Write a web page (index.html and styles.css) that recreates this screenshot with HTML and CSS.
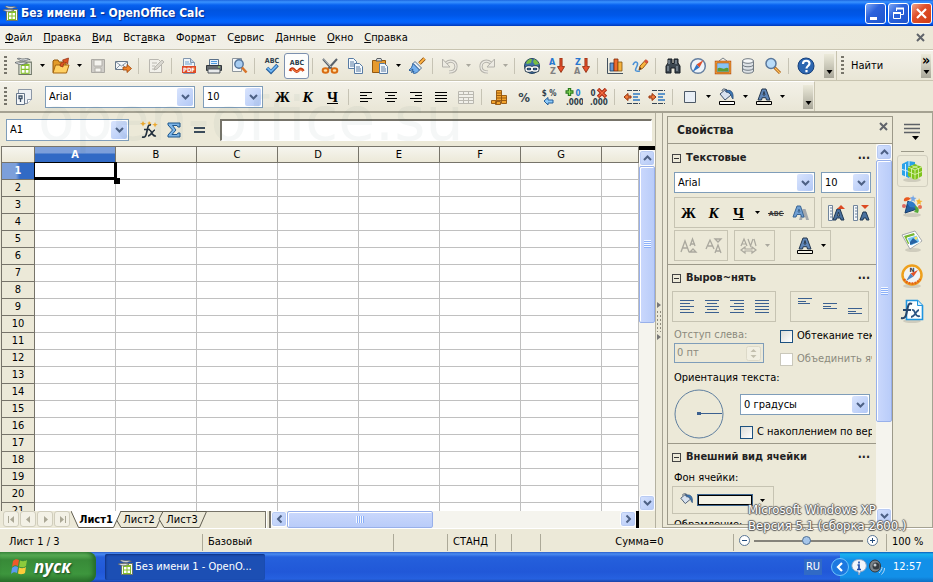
FILE: index.html
```html
<!DOCTYPE html>
<html lang="ru">
<head>
<meta charset="utf-8">
<title>Без имени 1 - OpenOffice Calc</title>
<link rel="stylesheet" href="styles.css">
</head>
<body>
<svg class="sprite" aria-hidden="true">
  <symbol id="i-calc" viewBox="0 0 16 16"><path d="M3.500 4.500h11v11h-11z" fill="#f8faf2" stroke="#6b7466"/><path d="M5 6h8v9H5z" fill="#86bf2c"/><path d="M6 8h2.500v2.500H6zM9.500 8H12v2.500H9.500zM6 11.500h2.500V14H6zM9.500 11.500H12V14H9.500z" fill="#fff"/><path d="M2 1.500c2-1 3 .3 5 .3S11 .5 13.500 2.500C11 2 10 3.500 7.500 3.500S4 2.500 2 1.500zM0 5c2-1.200 4-.3 5.500-.3S8.500 3.800 11 5.500C9 5.300 8 6.800 6 6.800S2 6 0 5z" fill="#e4e7e8" stroke="#596065" stroke-width=".7"/></symbol>
  <symbol id="i-chev" viewBox="0 0 9 6"><path d="M1 1l3.500 3.500L8 1" fill="none" stroke="#4d6185" stroke-width="2"/></symbol>
  <symbol id="i-drop" viewBox="0 0 5 3"><path d="M0 0h5L2.500 3z" fill="currentColor"/></symbol>
  <symbol id="i-fontcolor" viewBox="0 0 18 18"><path d="M3 12L7 1h4l4 11h-3.500l-.7-2.300H7.200L6.500 12zm5-5h2L9 3.500z" fill="#5f86b8" stroke="#26384f"/><path d="M1.500 13.500h15v3h-15z" fill="#f3f1e6" stroke="#000"/></symbol>
  <symbol id="i-bucket" viewBox="0 0 18 18"><path d="M2 7l6-5 5 6-6 5z" fill="#d8e2ef" stroke="#40536c"/><path d="M4 4c0-3 5-3 5 2" fill="none" stroke="#40536c"/><path d="M7 4c5-2 9 0 8 8-2-1-1-5-4-6z" fill="#3c78b8" stroke="#28486e" stroke-width=".7"/></symbol>
  <symbol id="i-left" viewBox="0 0 18 18"><path d="M3 4.500h12M3 7.500h7M3 10.500h12M3 13.500h8" stroke="currentColor"/></symbol>
  <symbol id="i-center" viewBox="0 0 18 18"><path d="M3 4.500h12M6 7.500h7M3 10.500h12M5 13.500h8" stroke="currentColor"/></symbol>
  <symbol id="i-right" viewBox="0 0 18 18"><path d="M3 4.500h12M8 7.500h7M3 10.500h12M7 13.500h8" stroke="currentColor"/></symbol>
  <symbol id="i-just" viewBox="0 0 18 18"><path d="M3 4.500h12M3 7.500h12M3 10.500h12M3 13.500h12" stroke="currentColor"/></symbol>
  <symbol id="i-close" viewBox="0 0 9 9"><path d="M1 1l7 7M8 1L1 8" stroke="#60646a" stroke-width="2"/></symbol>
  <symbol id="i-redarrow" viewBox="0 0 7 14"><path d="M2.500 0h2v8H6.800L3.500 13.500 .2 8h2.300z" fill="#e8502c" stroke="#8d2a0c" stroke-width=".8"/></symbol>
  <symbol id="i-overflow" viewBox="0 0 9 5"><path d="M1.500 0h6L4.500 4z" fill="#000"/></symbol>
</svg>

<div class="app">
  <header class="titlebar">
    <svg class="s16"><use href="#i-calc"/></svg>
    <h1>Без имени 1 - OpenOffice Calc</h1>
    <div class="winbtns">
      <button class="wb" aria-label="Свернуть"><svg viewBox="0 0 19 19"><path d="M4 13h7v3H4z" fill="#fff"/></svg></button>
      <button class="wb" aria-label="Восстановить"><svg viewBox="0 0 19 19" fill="none" stroke="#fff"><path d="M7.500 7V4.500h7v6H12"/><path d="M7 4.500h8" stroke-width="2"/><path d="M4.500 8.500h7v6h-7z"/><path d="M4 9h8" stroke-width="2"/></svg></button>
      <button class="wb wb-close" aria-label="Закрыть"><svg viewBox="0 0 19 19"><path d="M5 5l9 9M14 5l-9 9" stroke="#fff" stroke-width="2.200"/></svg></button>
    </div>
  </header>

  <nav class="menubar">
    <button><u>Ф</u>айл</button><button><u>П</u>равка</button><button><u>В</u>ид</button><button>Вст<u>а</u>вка</button><button>Фор<u>м</u>ат</button><button>С<u>е</u>рвис</button><button><u>Д</u>анные</button><button><u>О</u>кно</button><button><u>С</u>правка</button>
    <button class="doc-close" aria-label="Закрыть документ"><svg width="9" height="9"><use href="#i-close"/></svg></button>
  </nav>

  <div class="toolbar std">
    <i class="grip"></i>
    <button class="tb" aria-label="Создать"><svg><use href="#i-calc"/></svg></button><button class="dd" aria-label="Список"><svg><use href="#i-drop"/></svg></button>
    <button class="tb" aria-label="Открыть"><svg viewBox="0 0 18 18"><path d="M1 15.500V4l1-1h4l1 2h7v10.500z" fill="#e39a28" stroke="#93570d"/><path d="M1 16l2.500-8H17l-2.500 8z" fill="#ffd063" stroke="#a5650f"/><path d="M8 9c0-3 2-4 4-4l-1.500-2L16.500 1l-.8 6-1.600-1.500C12 6 11 7 11 10z" fill="#dd5523" stroke="#912c0c" stroke-width=".7"/></svg></button><button class="dd" aria-label="Список"><svg><use href="#i-drop"/></svg></button>
    <button class="tb" aria-label="Сохранить"><svg viewBox="0 0 18 18"><path d="M2.500 2.500h13v13h-13z" fill="#cfcdc8" stroke="#aaa8a2"/><path d="M5 3h8v6H5zM6 11h6v4H6z" fill="#f5f4ef" stroke="#b2b0aa"/></svg></button>
    <button class="tb" aria-label="Отправить"><svg viewBox="0 0 18 18"><path d="M1.500 4.500h12v8h-12z" fill="#f3f5f7" stroke="#68798a"/><path d="M2 5l5.500 4L13 5M2 12l4-4M13 12L9 8" stroke="#8897a6" fill="none"/><path d="M9 10h4V7.500l4.500 4L13 15.500V13H9z" fill="#f0852a" stroke="#9a4208" stroke-width=".8"/></svg></button>
    <i class="sep"></i>
    <button class="tb" aria-label="Правка"><svg viewBox="0 0 18 18" fill="none" stroke="#b9b7b0"><path d="M2.500 2.500h9l3 3v10h-12z" fill="#f1f0ea"/><path d="M5 6h5M5 9h3M5 12h2"/><path d="M7 13l1-3 7-7 2 2-7 7z" fill="#d8d6cf"/></svg></button>
    <i class="sep"></i>
    <button class="tb" aria-label="PDF"><svg viewBox="0 0 18 18"><path d="M3.500 1.500h7l4 4v11h-11z" fill="#eef4fa" stroke="#8296ae"/><path d="M10.500 1.500v4h4" fill="#bcd0e6" stroke="#8296ae"/><path d="M5 5h4M5 7h7" stroke="#6fa0cf"/><path d="M2 9h14v7H2z" fill="#dd4a26"/><text x="9" y="15" class="pdf">PDF</text></svg></button>
    <button class="tb" aria-label="Печать"><svg viewBox="0 0 18 18"><path d="M4.500 2.500h9v6h-9z" fill="#e6f0fa" stroke="#5b7088"/><path d="M6 4.500h6M6 6.500h6" stroke="#4d9be0"/><path d="M1.500 8.500h15v5h-15z" fill="#64696d" stroke="#33383c"/><path d="M3 12h12v4H3z" fill="#e8eaeb" stroke="#4c5358"/><path d="M13 10h2" stroke="#9de06b"/></svg></button>
    <button class="tb" aria-label="Предпросмотр"><svg viewBox="0 0 18 18"><path d="M2.500 1.500h9v13h-9z" fill="#f5f7f8" stroke="#8d959b"/><circle cx="9" cy="7" r="4.200" fill="#a8cdf2" stroke="#54749a" stroke-width="1.400"/><path d="M12 10.500l4.500 5" stroke="#d8742a" stroke-width="2.600"/></svg></button>
    <i class="sep"></i>
    <button class="tb" aria-label="Орфография"><svg viewBox="0 0 18 18"><text x="9" y="6" class="abc">ABC</text><path d="M4 11l4 4 6.500-7" fill="none" stroke="#245e9c" stroke-width="3.600"/><path d="M4.500 11l3.500 3.500L14 8.500" fill="none" stroke="#6db4f2" stroke-width="1.800"/></svg></button>
    <button class="tb on" aria-label="Автопроверка" aria-pressed="true"><svg viewBox="0 0 18 18"><text x="9" y="8" class="abc">ABC</text><path d="M2 14c1-3 3-3 4.500-1s3 2 4.500 0 3-1 4.500 1" fill="none" stroke="#c8380f" stroke-width="2.800"/><path d="M3 13c1-1 2-1 3.500.5s3 1 4.500 0 2-.5 3.500 0" fill="none" stroke="#ff9254"/></svg></button>
    <i class="sep"></i>
    <button class="tb" aria-label="Вырезать"><svg viewBox="0 0 18 18"><path d="M2 2l9 10M16 2L7 12" stroke="#59626b" stroke-width="2"/><path d="M2.500 2L10 10" stroke="#d6dade" stroke-width=".8"/><g fill="#ffe2a8" stroke="#d96d13" stroke-width="2"><ellipse cx="4.500" cy="13.500" rx="2.800" ry="2.300"/><ellipse cx="13.500" cy="13.500" rx="2.800" ry="2.300"/></g></svg></button>
    <button class="tb" aria-label="Копировать"><svg viewBox="0 0 18 18" fill="#f4f9fd" stroke="#587ba3"><path d="M2.500 1.500h5l3 3v7h-8z"/><path d="M4 5h4M4 7h4M4 9h4"/><path d="M8.500 6.500h5l3 3v7h-8z"/><path d="M10 10h4M10 12h5M10 14h5"/></svg></button>
    <button class="tb" aria-label="Вставить"><svg viewBox="0 0 18 18"><path d="M1.500 3.500h13v12h-13z" fill="#e69a2e" stroke="#935810"/><path d="M5 4l1-2.500h4L11 4z" fill="#dfe2e5" stroke="#5b6065"/><path d="M8.500 6.500h5l3 3v7h-8z" fill="#f2f7fc" stroke="#587ba3"/><path d="M10 10h4M10 12h5M10 14h5" stroke="#587ba3"/></svg></button><button class="dd" aria-label="Список"><svg><use href="#i-drop"/></svg></button>
    <button class="tb" aria-label="Формат по образцу"><svg viewBox="0 0 18 18"><path d="M16.500 1.500l-5 5" stroke="#8a4d0c" stroke-width="3.600"/><path d="M16.500 1.500l-5 5" stroke="#ffb545" stroke-width="1.800"/><path d="M7 4.500l6.500 6.500-2 2L5 6.500z" fill="#e9eef3" stroke="#54708f"/><path d="M5 6.500l6.500 6.500c-2 3-5.500 4-6.500 3l1-2-2.500 1.500L5 12l-3 2-1-1c2-1 3-3 4-6.500z" fill="#76b1ee" stroke="#2d619c"/></svg></button>
    <i class="sep"></i>
    <button class="tb" aria-label="Отменить"><svg viewBox="0 0 18 18"><path d="M5 6c5-4 10-1 10 3.500S11 15 8 15" fill="none" stroke="#b4b2ab" stroke-width="3.200"/><path d="M5 6c5-4 10-1 10 3.500S11 15 8 15" fill="none" stroke="#eceae2" stroke-width="1.300"/><path d="M1.500 2v8H9z" fill="#eceae2" stroke="#b4b2ab"/></svg></button><button class="dd off" aria-label="Список"><svg><use href="#i-drop"/></svg></button>
    <button class="tb" aria-label="Вернуть"><svg viewBox="0 0 18 18"><path d="M13 6C8 2 3 5 3 9.500S7 15 10 15" fill="none" stroke="#b4b2ab" stroke-width="3.200"/><path d="M13 6C8 2 3 5 3 9.500S7 15 10 15" fill="none" stroke="#eceae2" stroke-width="1.300"/><path d="M16.500 2v8H9z" fill="#eceae2" stroke="#b4b2ab"/></svg></button><button class="dd off" aria-label="Список"><svg><use href="#i-drop"/></svg></button>
    <i class="sep"></i>
    <button class="tb" aria-label="Гиперссылка"><svg viewBox="0 0 18 18"><circle cx="9" cy="9" r="7.500" fill="#3d70aa" stroke="#24425f"/><path d="M3 6c2-4 4-4 6-4l-1 4-4 1zM11 2c3 1 4 3 5 5l-4 1-2-3z" fill="#79bd43"/><g fill="none" stroke="#24384a" stroke-width="3"><rect x="3" y="10" width="6" height="4" rx="2"/><rect x="9" y="10" width="6" height="4" rx="2"/></g><g fill="none" stroke="#fff" stroke-width="1.300"><rect x="3" y="10" width="6" height="4" rx="2"/><rect x="9" y="10" width="6" height="4" rx="2"/></g></svg></button>
    <button class="tb" aria-label="По возрастанию"><svg viewBox="0 0 18 18"><text x="1" y="8" class="srt" fill="#2877d0">A</text><text x="2" y="17" class="srt" fill="#808080">Z</text><use href="#i-redarrow" x="9" y="1" width="8" height="15"/></svg></button>
    <button class="tb" aria-label="По убыванию"><svg viewBox="0 0 18 18"><text x="2" y="8" class="srt" fill="#2877d0">Z</text><text x="1" y="17" class="srt" fill="#808080">A</text><use href="#i-redarrow" x="9" y="1" width="8" height="15"/></svg></button>
    <i class="sep"></i>
    <button class="tb" aria-label="Диаграмма"><svg viewBox="0 0 18 18"><path d="M1.500 1v15.500H17" stroke="#43515e" fill="none"/><g stroke-width=".8"><path d="M4 6h4v8H4z" fill="#6398d4" stroke="#1f3f66"/><path d="M8 2h4v12H8z" fill="#ec6b2d" stroke="#7d2a08"/><path d="M12 5h4v9h-4z" fill="#f5b23e" stroke="#86530c"/></g></svg></button>
    <button class="tb" aria-label="Рисование"><svg viewBox="0 0 18 18"><path d="M2 8c2-5 6-3 4 1s-3 6 3 5" fill="none" stroke="#4a91d6" stroke-width="1.600"/><path d="M8 13l1-4 5.500-6L17 5l-5.500 6.500z" fill="#f8b53f" stroke="#965810"/><path d="M14 3.500l2.500 2" stroke="#d8543f" stroke-width="3"/><path d="M8 13l1-3 1.500 1.500z" fill="#533"/></svg></button>
    <i class="sep"></i>
    <button class="tb" aria-label="Найти и заменить"><svg viewBox="0 0 18 18"><path d="M2 16V9l2-3V2h4v4l1 1 1-1V2h4v4l2 3v7h-5v-5H7v5z" fill="#3c4750" stroke="#171d22"/><path d="M5 3v4M4 9v5M12 3v4M13 9v5" stroke="#a3b1bc"/></svg></button>
    <button class="tb" aria-label="Навигатор"><svg viewBox="0 0 18 18"><circle cx="9" cy="9" r="7.300" fill="#eef4fa" stroke="#6780a0" stroke-width="1.500"/><path d="M14.500 3L7.500 7.500l3 3z" fill="#e0502c"/><path d="M3.500 15l4-7.500 3 3z" fill="#2f74c4"/></svg></button>
    <button class="tb" aria-label="Галерея"><svg viewBox="0 0 18 18"><path d="M5 4l4-3 4 3" fill="none" stroke="#7a818a"/><path d="M2 5h14v11H2z" fill="#86c3f4" stroke="#b0430f" stroke-width="2.400"/><path d="M2 5h14v11H2z" fill="none" stroke="#f7b13d" stroke-width="1.100"/><path d="M3.500 14.500v-3c3-2 5 1 7 0s3-1 4 0v3z" fill="#589c35"/></svg></button>
    <button class="tb" aria-label="Источники данных"><svg viewBox="0 0 18 18" stroke="#727b83"><path d="M3.500 4v10c0 3 11 3 11 0V4z" fill="#dde2e6"/><ellipse cx="9" cy="4" rx="5.500" ry="2.300" fill="#f6f8f9"/><path d="M3.500 7.500c0 3 11 3 11 0M3.500 11c0 3 11 3 11 0" fill="none"/></svg></button>
    <button class="tb" aria-label="Масштаб"><svg viewBox="0 0 18 18"><path d="M10.500 10.500l5.500 5.500" stroke="#a95d14" stroke-width="3"/><path d="M11 11l5 5" stroke="#ffc15d" stroke-width="1.200"/><circle cx="7" cy="6.500" r="5" fill="#b9dcf9" stroke="#59779b" stroke-width="1.500"/></svg></button>
    <i class="sep"></i>
    <button class="tb" aria-label="Справка"><svg viewBox="0 0 18 18"><circle cx="9" cy="9" r="8" fill="#2c66b1" stroke="#17407a"/><path d="M6 7c0-4.500 6.500-4 6.500-.5 0 2.500-3 2.500-3 5M9.500 13v2.200" fill="none" stroke="#fff" stroke-width="2.200"/></svg></button>
    <button class="over first" aria-label="Другие"><svg width="9" height="5"><use href="#i-overflow"/></svg></button>
    <div class="findbar"><i class="grip"></i><span>Найти</span><button class="over" aria-label="Другие кнопки"><b>»</b><svg width="9" height="5"><use href="#i-overflow"/></svg></button></div>
  </div>

  <div class="toolbar-row">
  <div class="toolbar fmt">
    <i class="grip"></i>
    <button class="tb" aria-label="Стили"><svg viewBox="0 0 18 18"><path d="M3.500 1.500h13v10l-4 4h-9z" fill="#edf0f4" stroke="#8c97a6"/><path d="M12.500 15.500v-4h4" fill="#fff" stroke="#8c97a6"/><path d="M1.500 5.500h8v11h-8z" fill="#f3f6f9" stroke="#66768b"/><path d="M4 8h3v2.500H4zM5.500 10.500V14" fill="none" stroke="#3d5067" stroke-width="1.300"/></svg></button>
    <span class="combo c-font"><select aria-label="Шрифт"><option>Arial</option></select><i class="ar"><svg><use href="#i-chev"/></svg></i></span>
    <span class="combo c-size"><select aria-label="Кегль"><option>10</option></select><i class="ar"><svg><use href="#i-chev"/></svg></i></span>
    <button class="tb serif">Ж</button><button class="tb serif it">К</button><button class="tb serif ul">Ч</button>
    <i class="sep"></i>
    <button class="tb" aria-label="По левому краю"><svg><use href="#i-left"/></svg></button><button class="tb" aria-label="По центру"><svg><use href="#i-center"/></svg></button><button class="tb" aria-label="По правому краю"><svg><use href="#i-right"/></svg></button><button class="tb" aria-label="По ширине"><svg><use href="#i-just"/></svg></button>
    <button class="tb" aria-label="Объединить"><svg viewBox="0 0 18 18"><path d="M1.500 3.500h15v12h-15zM1.500 6.500h15M1.500 9.500h15M1.500 12.500h15M6.500 3.500v3M11.500 3.500v3M6.500 9.500v6M11.500 9.500v6" fill="#f1f0ea" stroke="#bab8b0"/></svg></button>
    <i class="sep"></i>
    <button class="tb" aria-label="Денежный"><svg viewBox="0 0 18 18" fill="#f3a42e" stroke="#92530b" stroke-width=".9"><path d="M6.500 2.500h5v10h-5z"/><path d="M11.500 7.500h5v8h-5z"/><path d="M1.500 12.500h5v3h-5zM5.500 13.500h5v3h-5z"/><path d="M6.500 5h5M6.500 7.500h5M6.500 10h5M11.500 10h5M11.500 12.500h5"/></svg></button>
    <button class="tb" aria-label="Процент"><svg viewBox="0 0 18 18"><text x="9" y="14" class="pct">%</text></svg></button>
    <button class="tb" aria-label="Стандартный"><svg viewBox="0 0 18 18"><text x="9" y="8" class="fmt9">$ %</text><path d="M4 13l4-3.500V12h5v3H8v2z" fill="#8ecbfa" stroke="#245f9b"/></svg></button>
    <button class="tb" aria-label="Добавить разряд"><svg viewBox="0 0 18 18"><path d="M4.500 0v8M.5 4h8" stroke="#28791c" stroke-width="3.400"/><path d="M4.500 1v6M1.500 4h6" stroke="#8ddb5a" stroke-width="1.200"/><text x="13" y="8" class="fmt9 bl">0</text><text x="10" y="17" class="fmt9">.000</text></svg></button>
    <button class="tb" aria-label="Убрать разряд"><svg viewBox="0 0 18 18"><text x="3" y="8" class="fmt9">0</text><text x="9" y="17" class="fmt9">.000</text><path d="M8 1l8 8M16 1L8 9" stroke="#a8280e" stroke-width="3.400"/><path d="M8.500 1.500l7 7M15.500 1.500l-7 7" stroke="#f36b43" stroke-width="1.400"/></svg></button>
    <i class="sep"></i>
    <button class="tb" aria-label="Уменьшить отступ"><svg viewBox="0 0 18 18"><path d="M4 2.500h13M4 15.500h13" stroke="#374655" stroke-dasharray="5 1"/><path d="M10 6h7M10 9h5M10 12h7" stroke="#2e78c2" stroke-width="1.600"/><path d="M8 8H5V5.500L1 9l4 3.500V10h3z" fill="#ef7b3d" stroke="#96330d"/></svg></button>
    <button class="tb" aria-label="Увеличить отступ"><svg viewBox="0 0 18 18"><path d="M4 2.500h13M4 15.500h13" stroke="#374655" stroke-dasharray="5 1"/><path d="M10 6h7M10 9h5M10 12h7" stroke="#2e78c2" stroke-width="1.600"/><path d="M1 8h3V5.500L8 9l-4 3.500V10H1z" fill="#ef7b3d" stroke="#96330d"/></svg></button>
    <i class="sep"></i>
    <button class="tb" aria-label="Обрамление"><svg viewBox="0 0 18 18"><path d="M3.500 3.500h11v11h-11z" fill="#e9eff6" stroke="#4d5966"/></svg></button><button class="dd" aria-label="Список"><svg><use href="#i-drop"/></svg></button>
    <button class="tb" aria-label="Цвет фона"><svg viewBox="0 0 18 18"><use href="#i-bucket" y="-1" width="18" height="18"/><path d="M1.500 13.500h15v3h-15z" fill="#fff" stroke="#000"/></svg></button><button class="dd" aria-label="Список"><svg><use href="#i-drop"/></svg></button>
    <button class="tb" aria-label="Цвет шрифта"><svg><use href="#i-fontcolor"/></svg></button><button class="dd" aria-label="Список"><svg><use href="#i-drop"/></svg></button>
    <button class="over last" aria-label="Другие"><svg width="9" height="5"><use href="#i-overflow"/></svg></button>
  </div>
  </div>

  <main class="work">
    <section class="sheet">
      <div class="formula">
        <span class="combo c-name"><select aria-label="Имя ячейки"><option>A1</option></select><i class="ar"><svg><use href="#i-chev"/></svg></i></span>
        <button class="tb" aria-label="Мастер функций"><svg viewBox="0 0 18 18"><path d="M11 4c-3-1-3 2-4 6s-1 7-5 6M4 8.500h6" fill="none" stroke="#22303d" stroke-width="1.700"/><path d="M9 9c3-1 2 7 7 6M15 9c-2 0-4 6-7 6" fill="none" stroke="#22303d" stroke-width="1.600"/><path d="M3 0l1 2 2 .5-2 1L3 5.500 2 3.500l-2-1L2 2zM9 0l1 1.500 1.500.5-1.500 1L9 4l-.7-1.500L7 2l1.500-.5zM15 1l.8 2 2 .5-2 1-.8 2-.8-2-2-1 2-.5z" fill="#f1a929"/></svg></button>
        <button class="tb" aria-label="Сумма"><svg viewBox="0 0 18 18"><path d="M3 2h12v4h-2l-1-1.500H7.500L11 9l-4 4.500h5l1-1.500h2v4H3v-2l4.500-5L3 4z" fill="#7db5e8" stroke="#1d568c"/></svg></button>
        <button class="tb" aria-label="Функция"><svg viewBox="0 0 18 18"><path d="M4 7h11M4 11h11" stroke="#3b4b5a" stroke-width="2"/></svg></button>
        <input class="line" type="text" aria-label="Строка ввода">
      </div>
      <div class="gridrow">
        <div class="grid"><table id="cells"><colgroup><col class="rowh"><col class="cw"><col class="cw"><col class="cw"><col class="cw"><col class="cw"><col class="cw"><col class="cw"><col></colgroup>
          <thead><tr><th></th><th class="cur">A</th><th>B</th><th>C</th><th>D</th><th>E</th><th>F</th><th>G</th><th></th></tr></thead><tbody></tbody></table></div>
        <div class="vsb"><i class="blk"></i><button class="sbtn up" aria-label="Вверх"><svg><use href="#i-chev"/></svg></button><i class="thumb"></i><button class="sbtn down" aria-label="Вниз"><svg><use href="#i-chev"/></svg></button></div>
      </div>
      <div class="tabsrow">
        <div class="tabs">
          <div class="navs"><button aria-label="Первый"><svg viewBox="0 0 9 9"><path d="M1.500 1v7" stroke="currentColor"/><path d="M7 1v7L3 4.500z"/></svg></button><button aria-label="Назад"><svg viewBox="0 0 9 9"><path d="M6 1v7L2 4.500z"/></svg></button><button aria-label="Вперёд"><svg viewBox="0 0 9 9"><path d="M3 1v7l4-3.500z"/></svg></button><button aria-label="Последний"><svg viewBox="0 0 9 9"><path d="M2 1v7l4-3.500z"/><path d="M7.500 1v7" stroke="currentColor"/></svg></button></div>
          <button class="tab active"><svg viewBox="0 0 50 17" preserveAspectRatio="none"><path d="M0 0l7.500 16.500h35L50 0" fill="#fff" stroke="#605d50"/></svg><span>Лист1</span></button><button class="tab"><svg viewBox="0 0 50 17" preserveAspectRatio="none"><path d="M6 .5L2 8l5 8.500h35.500L49.500.5z" fill="#ece9d8" stroke="#605d50"/></svg><span>Лист2</span></button><button class="tab"><svg viewBox="0 0 50 17" preserveAspectRatio="none"><path d="M6 .5L2 8l5 8.500h35.500L49.500.5z" fill="#ece9d8" stroke="#605d50"/></svg><span>Лист3</span></button>
          <i class="rest"></i>
        </div>
        <i class="hsplit"></i>
        <div class="hsb"><button class="sbtn lf" aria-label="Влево"><svg><use href="#i-chev"/></svg></button><i class="thumb"></i><button class="sbtn rt" aria-label="Вправо"><svg><use href="#i-chev"/></svg></button></div>
        <i class="vblk"></i><i class="corner"></i>
      </div>
    </section>

    <div class="splitter"><svg viewBox="0 0 6 38"><path d="M1 0l4 3-4 3zM1 32l4 3-4 3z" fill="#777"/><path d="M1.500 9v21M4.500 9v21" stroke="#8f8c7e" stroke-dasharray="2 2"/></svg></div>

    <aside class="sidebar">
      <div class="panel">
        <div class="ptitle"><h2>Свойства</h2><button aria-label="Закрыть панель"><svg width="9" height="9"><use href="#i-close"/></svg></button></div>
        <div class="pbody">
          <div class="sections">
            <section class="sec first">
              <h3><i class="minus"></i>Текстовые<span>...</span></h3>
              <div class="row g6"><span class="combo c-pfont"><select aria-label="Имя шрифта"><option>Arial</option></select><i class="ar"><svg><use href="#i-chev"/></svg></i></span><span class="combo c-psize"><select aria-label="Размер"><option>10</option></select><i class="ar"><svg><use href="#i-chev"/></svg></i></span></div>
              <div class="row g6 clip">
                <div class="box"><button class="tb serif">Ж</button><button class="tb serif it">К</button><button class="tb serif ul">Ч</button><button class="dd" aria-label="Список"><svg><use href="#i-drop"/></svg></button><button class="tb" aria-label="Зачёркнутый"><svg viewBox="0 0 18 18"><text x="9" y="12" class="strk">ABC</text><path d="M1 9.500h16" stroke="#333"/></svg></button><button class="tb" aria-label="Тень"><svg viewBox="0 0 18 18"><path d="M7 16L10.500 5h3L17 16h-3l-.5-2.500h-3L10 16z" fill="#a5a9ad"/><path d="M1 13L5 2h3.500L12 13H9.500L9 10.500H5L4 13zm5-5h2L7 5z" fill="#6f9fd3" stroke="#396594"/></svg></button></div>
                <div class="box"><button class="tb" aria-label="Увеличить"><svg viewBox="0 0 18 18"><path d="M1.500 1.500h4v15h-4zM3 4h2M3 7h2M3 10h2M3 13h2" fill="#f5f8fa" stroke="#71859c"/><path d="M6 16l4-11h3l4 11h-3l-.5-2h-4l-.5 2zm4.500-4h2l-1-4z" fill="#4a719e" stroke="#1f3751"/><path d="M10 5l4-4 4 4z" fill="#dc4a22"/></svg></button><button class="tb" aria-label="Уменьшить"><svg viewBox="0 0 18 18"><path d="M1.500 1.500h4v15h-4zM3 4h2M3 7h2M3 10h2M3 13h2" fill="#f5f8fa" stroke="#71859c"/><path d="M8 16l3-8h3l3 8h-2.500l-.5-2h-2.500l-.5 2z" fill="#4a719e" stroke="#1f3751"/><path d="M9 1h8l-4 4z" fill="#dc4a22"/></svg></button></div>
              </div>
              <div class="row g6 tight">
                <div class="box"><button class="tb" aria-label="Надстрочный"><svg viewBox="0 0 18 18" fill="none" stroke="#aaa89e" stroke-width="1.300"><path d="M1 15L5 4l4 11M3 11h5M10 9l2.500-7L15 9M11 7h4M10 15l3-3 3 3z"/></svg></button><button class="tb" aria-label="Подстрочный"><svg viewBox="0 0 18 18" fill="none" stroke="#aaa89e" stroke-width="1.300"><path d="M1 12L5 3l4 9M3 9h5M10 16l3-8 3 8M11 14h4M10 2h6l-3 3z"/></svg></button></div>
                <div class="box"><button class="tb" aria-label="Интервал"><svg viewBox="0 0 18 18" fill="none" stroke="#aaa89e" stroke-width="1.200"><path d="M1 9l3-7 3 7M2 7h4M8 2l2.500 7L13 2M14 2l2 7M1 13l4-3v2h7v-2l4 3-4 3v-2H5v2z"/></svg></button><button class="dd off" aria-label="Список"><svg><use href="#i-drop"/></svg></button></div>
                <div class="box shift"><button class="tb" aria-label="Цвет шрифта"><svg><use href="#i-fontcolor"/></svg></button><button class="dd" aria-label="Список"><svg><use href="#i-drop"/></svg></button></div>
              </div>
            </section>
            <section class="sec">
              <h3><i class="minus"></i>Выров~нять<span>...</span></h3>
              <div class="row aligns">
                <div class="box blue"><button class="tb" aria-label="Влево"><svg viewBox="0 0 18 18"><path d="M2 2.500h14M2 5.500h10M2 8.500h14M2 11.500h10M2 14.500h14" stroke="currentColor"/></svg></button><button class="tb" aria-label="Центр"><svg viewBox="0 0 18 18"><path d="M2 2.500h14M4 5.500h10M2 8.500h14M4 11.500h10M2 14.500h14" stroke="currentColor"/></svg></button><button class="tb" aria-label="Вправо"><svg viewBox="0 0 18 18"><path d="M2 2.500h14M6 5.500h10M2 8.500h14M6 11.500h10M2 14.500h14" stroke="currentColor"/></svg></button><button class="tb" aria-label="Ширина"><svg viewBox="0 0 18 18"><path d="M2 2.500h14M2 5.500h14M2 8.500h14M2 11.500h14M2 14.500h14" stroke="currentColor"/></svg></button></div>
                <div class="box blue"><button class="tb" aria-label="Верх"><svg viewBox="0 0 18 18"><path d="M2 .5h14M2 3.500h8M2 5.500h12" stroke="currentColor"/></svg></button><button class="tb" aria-label="Середина"><svg viewBox="0 0 18 18"><path d="M2 5.500h14M2 8.500h8M2 10.500h14" stroke="currentColor"/></svg></button><button class="tb" aria-label="Низ"><svg viewBox="0 0 18 18"><path d="M2 10.500h14M2 13.500h8M2 15.500h14" stroke="currentColor"/></svg></button></div>
              </div>
              <div class="row indent">
                <div class="col"><label class="dis" for="ind">Отступ слева:</label><span class="spin"><input id="ind" type="text" value="0 пт" disabled><svg viewBox="0 0 15 15"><rect x=".5" y=".5" width="14" height="14" rx="2" fill="#f1efe2" stroke="#dcd9c8"/><path d="M4.500 6L7.500 3l3 3zM4.500 9l3 3 3-3z" fill="#c2bfae"/></svg></span></div>
                <div class="col checks"><label><input type="checkbox">Обтекание текстом</label><label class="dis"><input type="checkbox" disabled>Объединить ячейки</label></div>
              </div>
              <label class="orient" for="deg">Ориентация текста:</label>
              <div class="row rot">
                <svg class="dial" viewBox="0 0 50 50"><circle cx="25" cy="25" r="24" fill="none" stroke="#5f7f9f"/><path d="M25 24.500h23" stroke="#3b6090"/><path d="M23 23h4v3h-4z" fill="#3b6090"/></svg>
                <div class="col"><span class="combo c-deg"><select id="deg"><option>0 градусы</option></select><i class="ar"><svg><use href="#i-chev"/></svg></i></span><label class="stack"><input type="checkbox">С накоплением по вертикали</label></div>
              </div>
            </section>
            <section class="sec">
              <h3><i class="minus"></i>Внешний вид ячейки<span>...</span></h3>
              <span class="lab">Фон ячейки:</span>
              <div class="box fill"><svg class="s16"><use href="#i-bucket"/></svg><i class="swatch"></i><button class="dd" aria-label="Список"><svg><use href="#i-drop"/></svg></button></div>
              <span class="lab cut">Обрамление:</span>
            </section>
          </div>
          <div class="vsb side"><button class="sbtn up" aria-label="Вверх"><svg><use href="#i-chev"/></svg></button><i class="thumb"></i><button class="sbtn down" aria-label="Вниз"><svg><use href="#i-chev"/></svg></button></div>
        </div>
      </div>
      <div class="strip">
        <button class="deckmenu" aria-label="Настройки боковой панели"><svg viewBox="0 0 18 18"><path d="M1 1.500h16M1 5.500h16M1 9.500h16" stroke="#5c6166" stroke-width="1.500"/><path d="M9 13h7l-3.500 4z" fill="#000"/></svg></button>
        <i class="rule"></i>
        <button class="deck on" aria-label="Свойства"><svg viewBox="0 0 24 24"><ellipse cx="12" cy="21" rx="9" ry="2" fill="#cfccbd"/><path d="M2 5l6-3 7 1v8l-6 8-7-3z" fill="#2ba2e8"/><path d="M2 10.500l7 2M5.500 5v13M9 7V2" stroke="#d9f1ff"/><path d="M8 8l7-3 7 3v9l-7 4-7-4z" fill="#7fc31c"/><path d="M8 8l7 3 7-3M15 11v10M8 12.500l7 3 7-3M11.500 9.500v9.500M18.500 9.500v9.500M11.500 6.500l7 3M18.500 6.500l-7 3" fill="none" stroke="#e1f6bc" stroke-width=".8"/></svg></button>
        <button class="deck" aria-label="Стили"><svg viewBox="0 0 24 24"><ellipse cx="12" cy="21" rx="9" ry="2" fill="#cfccbd"/><path d="M5 19L8 7l9 8z" fill="#255f9f" stroke="#173d6a"/><path d="M7 9c3-4 8-1 10 5l-7-1z" fill="#2d7ac9"/><path d="M4 7c-1-4 5-5 7-2-2 0-3 3-7 2z" fill="#e8591f"/><path d="M13 1l1 2.500 2.500.5-2 1.500.5 2.500-2-1.500L11 8l.5-3L10 3.500l2.500-.5z" fill="#77a7e4"/><path d="M19 4l1 2.500 2.500.5-2 1.500.5 2.500-2-1.500L17 11l.5-3L16 6.500l2.500-.5z" fill="#f5b331"/><circle cx="4" cy="12" r="2" fill="#df6b63"/><circle cx="20" cy="13" r="2" fill="#e56c54"/><path d="M14 12c4 0 6 3 4 7l-4-1c2-2 2-4 0-6z" fill="#55a938"/></svg></button>
        <button class="deck" aria-label="Галерея"><svg viewBox="0 0 24 24"><ellipse cx="13" cy="21" rx="8" ry="2" fill="#cfccbd"/><path d="M2 6l13-4 7 10-12 8z" fill="#fff" stroke="#a4a8aa"/><path d="M4 7l10-3 3 8-9 3z" fill="#78b631"/><path d="M7 9l10-3 3 7-9 4z" fill="#78c8f4" stroke="#fff"/><path d="M10 13l3-4 5 4-8 3z" fill="#2763a4"/><circle cx="16" cy="9" r="1.500" fill="#ffe45a"/></svg></button>
        <button class="deck" aria-label="Навигатор"><svg viewBox="0 0 24 24"><ellipse cx="12" cy="22" rx="9" ry="2" fill="#cfccbd"/><circle cx="12" cy="11" r="9.500" fill="#f1f4f6" stroke="#eea01d" stroke-width="2.500"/><path d="M4 15c3 6 13 6 16 0" fill="none" stroke="#e4621a" stroke-width="2.500" stroke-dasharray="2 1"/><text x="12" y="8" class="north">N</text><path d="M18 6l-7.500 3.500 3 3z" fill="#e2532a"/><path d="M6 17l4.500-7.500 3 3z" fill="#5384bd"/></svg></button>
        <button class="deck" aria-label="Функции"><svg viewBox="0 0 24 24"><ellipse cx="12" cy="22" rx="9" ry="2" fill="#cfccbd"/><path d="M6.500 1.500h11l5 5v14h-16z" fill="#fdfefe" stroke="#1f95df" stroke-width="1.600"/><path d="M17.500 1.500v5h5" fill="#d5edfc" stroke="#1f95df"/><path d="M12 5c-4-2-4 3-5 7s-1 8-6 7M3 11h8" fill="none" stroke="#27466b" stroke-width="2"/><path d="M12 11c4-1 2 8 8 6M19 11c-3 0-4 7-8 7" fill="none" stroke="#2c5584" stroke-width="1.800"/></svg></button>
      </div>
    </aside>
  </main>

  <footer class="status">
    <span class="st-sheet">Лист 1 / 3</span><span class="st-style">Базовый</span><span class="st-a"></span><span class="st-mode">СТАНД</span><span class="st-b"></span><span class="st-c"></span><span class="st-sum">Сумма=0</span>
    <span class="st-zoom"><button aria-label="Уменьшить"><svg viewBox="0 0 11 11"><circle cx="5.500" cy="5.500" r="5" fill="#fff" stroke="#587493"/><path d="M3 5.500h5" stroke="#234d7d"/></svg></button><input type="range" min="0" max="100" value="48" aria-label="Масштаб"><button aria-label="Увеличить"><svg viewBox="0 0 11 11"><circle cx="5.500" cy="5.500" r="5" fill="#fff" stroke="#587493"/><path d="M3 5.500h5M5.500 3v5" stroke="#234d7d"/></svg></button></span>
    <span class="st-pct">100 %</span>
  </footer>

  <div class="taskbar">
    <button class="start"><svg viewBox="0 0 20 18"><path d="M3 3c2-2 4-2 6-1L8 8C6 7 4 7 2 9z" fill="#f0592a"/><path d="M10 2.500c2 1 5 1 7-.5l-1 6c-2 1.500-5 1.500-7 .5z" fill="#8ccb3c"/><path d="M2 10c2-2 4-2 6-1l-1 6c-2-1-4-1-6 1z" fill="#5b9bf3"/><path d="M9 9.500c2 1 5 1 7-.5l-1 6c-2 1.500-5 1.500-7 .5z" fill="#fbcb3a"/></svg><span>пуск</span></button>
    <button class="task"><svg class="s16"><use href="#i-calc"/></svg><span>Без имени 1 - OpenO...</span></button>
    <span class="lang">RU</span>
    <div class="tray">
      <button class="expand" aria-label="Показать значки"><svg viewBox="0 0 18 18"><circle cx="9" cy="9" r="8.500" fill="#1c78e0" stroke="#6fc4fb"/><path d="M11 5L7 9l4 4" fill="none" stroke="#fff" stroke-width="2.200"/></svg></button>
      <svg class="t16" viewBox="0 0 16 16"><path d="M8 .5c10 0 9 12 1.500 12L8 16l-1-3.500C-1.500 12-1 .5 8 .5z" fill="#f1f5fb" stroke="#8ea4c4"/><path d="M8 2.500v2M6.500 6H8v4.500M6 10.500h4" stroke="#1e4aa8" stroke-width="1.700" fill="none"/></svg>
      <svg class="t16" viewBox="0 0 16 16"><ellipse cx="6" cy="7" rx="5.500" ry="6" fill="#7b8388" stroke="#32383c"/><circle cx="7" cy="7" r="3.500" fill="#343b40"/><circle cx="6" cy="6" r="1.500" fill="#c9ced1"/><path d="M13 8c0 2-1 4-3 6M15.500 9c0 3-1.500 5-3 6.500" fill="none" stroke="#b8d9f5"/></svg>
      <time>12:57</time>
    </div>
  </div>

  <div class="watermark" aria-hidden="true">open-office.su</div>
  <div class="oslabel">Microsoft Windows XP<br>Версия 5.1 (сборка 2600.)</div>
</div>
<script src="script.js"></script>
</body>
</html>
```
FILE: styles.css
```css
* { box-sizing: border-box; }
body { margin: 0; font: 11px/16px "DejaVu Sans Condensed", "DejaVu Sans", sans-serif; color: #000; background: #ece9d8; overflow: hidden; }
button, input, select { font: inherit; color: inherit; margin: 0; padding: 0; border: 0; background: none; border-radius: 0; }
button { display: inline-flex; align-items: center; justify-content: center; flex: none; }
svg { display: block; flex: none; }
h1, h2, h3 { margin: 0; font-size: 12px; }
i { font-style: normal; flex: none; }
.sprite { position: absolute; width: 0; height: 0; }
.s16 { width: 16px; height: 16px; }
.app { position: relative; display: flex; flex-direction: column; height: 100vh; }

.titlebar { display: flex; align-items: center; height: 26px; flex: none; padding: 0 1px 0 3px; gap: 2px; background: linear-gradient(#1c66e0 0, #3a93ff 2px, #0862f0 5px, #0054e0 10px, #0057e8 15px, #0366ff 21px, #0660f8 23px, #0038b8 26px); }
.titlebar h1 { flex: 1; color: #fff; text-shadow: 1px 1px 1px #0a2b8c; white-space: nowrap; }
.winbtns { display: flex; gap: 2px; }
.wb { width: 21px; height: 21px; border: 1px solid #fff; border-radius: 3px; background: linear-gradient(135deg, #7fa8f5, #2b62dc 40%, #1f55cc); }
.wb svg { width: 19px; height: 19px; }
.wb-close { background: linear-gradient(135deg, #f0a58c, #e0502c 40%, #cf3c14); }

.menubar { display: flex; align-items: center; height: 24px; flex: none; padding-left: 5px; gap: 11px; border-bottom: 1px solid #c8c4b0; background: linear-gradient(90deg, #f2f1ea, #ece9d8); }
.menubar .doc-close { margin: 0 8px 0 auto; }

.toolbar { display: flex; align-items: center; }
.std { height: 31px; flex: none; border-top: 1px solid #fff; border-bottom: 1px solid #c8c4b0; background: linear-gradient(#f3f1e8, #e9e6d6); }
.toolbar-row { height: 32px; flex: none; border-bottom: 2px solid #a5a292; }
.fmt { width: 815px; height: 30px; border-top: 1px solid #fff; border-right: 1px solid #c8c4b0; background: linear-gradient(#f3f1e8, #e9e6d6); }
.grip { width: 3px; height: 19px; margin: 0 4px; background: repeating-linear-gradient(#77756b 0 2px, transparent 2px 4px); }
.tb { width: 25px; height: 26px; }
.tb svg { width: 18px; height: 18px; }
.tb.on { border: 1px solid #7c90ae; border-radius: 3px; background: #fdfdfc; }
.dd { width: 12px; height: 26px; }
.dd svg { width: 5px; height: 3px; }
.off { color: #aaa89e; }
.sep { width: 1px; height: 16px; margin: 0 4px 0 3px; background: #c6c3b4; }
.over { width: 10px; height: 24px; flex-direction: column; justify-content: flex-end; padding-bottom: 3px; background: linear-gradient(#eceada, #a9a799); }
.over b { font-size: 14px; line-height: 12px; }
.over.first { margin-left: 6px; }
.over.last { margin-left: 15px; }
.findbar { display: flex; align-items: center; flex: 1; height: 29px; margin-left: 2px; border-left: 1px solid #c8c4b0; }
.findbar .grip { margin-right: 7px; }
.findbar .over { margin: 0 2px 0 auto; justify-content: space-between; }
.serif { font: bold 15px/18px "Liberation Serif", serif; }
.it { font-style: italic; }
.ul { text-decoration: underline; }
.tb text { font-family: "DejaVu Sans Condensed", sans-serif; font-weight: bold; }
.pdf { font-size: 6px; fill: #fff; text-anchor: middle; }
.abc { font-size: 7px; fill: #2b3b49; text-anchor: middle; }
.srt { font-size: 9px; }
.pct { font-size: 13px; fill: #35434f; text-anchor: middle; }
.fmt9 { font-size: 8px; fill: #2f3d4a; text-anchor: middle; }
.fmt9.bl { fill: #2877d0; }
.strk { font-size: 7px; fill: #444; text-anchor: middle; }
.north { font: bold 6px "DejaVu Sans", sans-serif; fill: #333; text-anchor: middle; }

.combo { display: flex; height: 22px; flex: none; padding: 1px; border: 1px solid #7f9db9; background: #fff; }
.combo select { flex: 1; min-width: 0; padding: 0 2px; appearance: none; outline: 0; }
.ar { display: flex; align-items: center; justify-content: center; width: 16px; border-radius: 2px; background: linear-gradient(135deg, #d9e4fd, #b2c8f6); pointer-events: none; }
.ar svg { width: 9px; height: 6px; }
.c-font { width: 150px; margin: 0 8px 0 9px; }
.c-size { width: 60px; margin-right: 7px; }
.c-name { width: 123px; margin-right: 7px; }
.c-pfont { width: 141px; }
.c-psize { width: 50px; }
.c-deg { width: 130px; }

.work { display: flex; flex: 1; min-height: 0; }
.sheet { display: flex; flex-direction: column; flex: 1; min-width: 0; border-right: 1px solid #b4b1a0; }
.formula { display: flex; align-items: center; height: 33px; flex: none; padding: 0 3px 0 6px; }
.line { flex: 1; min-width: 0; height: 22px; margin-left: 9px; border: 1px solid #fff; border-top: 2px solid #77746a; border-left: 2px solid #77746a; background: #fff; }
.gridrow { display: flex; flex: 1; min-height: 0; padding-left: 1px; }
.grid { flex: 1; min-width: 0; overflow: hidden; background: #fff; }
table { width: 100%; table-layout: fixed; border-spacing: 0; }
.rowh { width: 34px; }
.cw { width: 81px; }
th, td { height: 17px; padding: 0; line-height: 14px; }
td { position: relative; border-right: 1px solid #c0c0c0; border-bottom: 1px solid #c0c0c0; }
th { font-weight: normal; text-align: center; border-right: 1px solid #77746a; border-bottom: 1px solid #77746a; background: #ece9d8; }
thead th { border-top: 1px solid #77746a; background: linear-gradient(#f6f5ef, #ece9d8); }
th:first-child { border-left: 1px solid #77746a; }
thead .cur { font-weight: bold; color: #fff; background: linear-gradient(#7c9fda 6px, #316ac5 7px); }
tbody .cur { font-weight: bold; color: #fff; background: linear-gradient(90deg, #7c9fda 14px, #316ac5 18px); }
.pick { z-index: 1; }
.pick::before { content: ""; position: absolute; inset: -1px -2px -1px -1px; border: 2px solid #000; border-width: 1px 3px 3px 1px; }
.pick::after { content: ""; position: absolute; right: -5px; bottom: -5px; width: 6px; height: 6px; background: #000; }

.vsb { display: flex; flex-direction: column; width: 16px; flex: none; background: #f5f4ee; }
.blk { height: 4px; background: #000; }
.sbtn { width: 16px; height: 16px; border: 1px solid #fff; border-radius: 3px; background: linear-gradient(135deg, #d6e2fd, #b4c9f7); box-shadow: inset 0 0 0 1px #b9cbf3; }
.sbtn svg { width: 9px; height: 6px; }
.up svg { transform: rotate(180deg); }
.lf svg { transform: rotate(90deg); }
.rt svg { transform: rotate(-90deg); }
.thumb { display: flex; align-items: center; justify-content: center; border: 1px solid #98b0ea; border-radius: 2px; background: linear-gradient(90deg, #cad8fc, #b9ccf9); box-shadow: inset 1px 1px 0 #fff; }
.thumb::after { content: ""; width: 7px; height: 8px; background: repeating-linear-gradient(#f4f8ff 0 1px, #8cb0f8 1px 2px); }
.vsb .thumb { height: 43%; }
.vsb .down { margin-top: auto; }
.tabsrow { display: flex; height: 17px; flex: none; }
.tabs { display: flex; width: 266px; flex: none; }
.navs { display: flex; gap: 1px; padding: 0 1px 0 3px; }
.navs button { width: 16px; height: 16px; border: 1px solid #d0cdbc; border-radius: 3px; background: #f3f1e6; color: #aaa795; }
.navs svg { width: 9px; height: 9px; fill: currentColor; }
.tab { position: relative; width: 50px; height: 17px; margin-right: -7px; }
.tab svg { position: absolute; inset: 0; width: 100%; height: 100%; }
.tab span { position: relative; }
.tab.active { z-index: 1; font-weight: bold; }
.rest { flex: 1; border-top: 1px solid #77746a; border-right: 1px solid #77746a; }
.hsplit { width: 5px; border-left: 1px solid #fff; border-right: 2px solid #77746a; }
.hsb { display: flex; flex: 1; background: #f5f4ee; }
.hsb .thumb { width: 40%; background: linear-gradient(#cad8fc, #b9ccf9); }
.hsb .thumb::after { width: 8px; height: 7px; background: repeating-linear-gradient(90deg, #f4f8ff 0 1px, #8cb0f8 1px 2px); }
.hsb .rt { margin-left: auto; }
.vblk { width: 3px; background: #000; }
.corner { width: 16px; }

.splitter { display: flex; align-items: center; justify-content: center; width: 7px; flex: none; border-right: 1px solid #a5a292; }
.splitter svg { width: 6px; height: 38px; }
.sidebar { display: flex; width: 270px; flex: none; padding: 3px 1px 2px 4px; border-right: 1px solid #a5a292; border-bottom: 1px solid #a5a292; }
.panel { display: flex; flex-direction: column; width: 226px; border: 1px solid #9c9989; }
.ptitle { display: flex; align-items: center; justify-content: space-between; height: 27px; flex: none; padding: 0 4px 0 9px; border-bottom: 1px solid #9c9989; }
.ptitle button { align-items: flex-start; height: 17px; }
h2, h3 { color: #222; }
h2 { font-size: 12px; }
.pbody { display: flex; flex: 1; min-height: 0; }
.sections { flex: 1; min-width: 0; overflow: hidden; }
.sec { padding: 0 4px 3px 4px; border-bottom: 1px solid #9c9989; }
.sec:last-child { border: 0; }
h3 { display: flex; align-items: center; gap: 5px; height: 26px; font-size: 11px; }
h3 span { margin-left: auto; font-size: 12px; line-height: 10px; padding: 0 2px 6px 0; }
.first h3 { height: 28px; }
.minus { width: 9px; height: 9px; border: 1px solid #444; background: linear-gradient(#333, #333) center / 5px 1px no-repeat; }
.row { display: flex; }
.g6 { gap: 6px; padding-left: 2px; }
.g6 .combo { height: 21px; }
.clip { margin-top: 4px; }
.tight { margin-top: 2px; }
.box { display: flex; align-items: center; height: 31px; flex: none; padding: 0 1px; border: 1px solid #c6c3b2; }
.shift { margin-left: 9px; }
.blue { color: #3b6090; }
.aligns { gap: 14px; }
.col { display: flex; flex-direction: column; flex: none; }
.indent { margin-top: 5px; gap: 16px; padding-left: 2px; }
.dis { color: #8b897d; }
.spin { display: flex; align-items: center; width: 90px; height: 20px; padding: 2px; border: 1px solid #7f9db9; }
.spin input { flex: 1; min-width: 0; color: #8b897d; }
.spin svg { width: 15px; height: 15px; }
.indent .checks, .rot .col { flex: 1; min-width: 0; overflow: hidden; }
.checks { gap: 7px; padding-top: 1px; }
label { white-space: nowrap; }
.checks label, .stack { display: flex; align-items: center; gap: 4px; }
input[type=checkbox] { appearance: none; width: 13px; height: 13px; flex: none; border: 1px solid #1c5180; background: linear-gradient(135deg, #dcdcd7, #fff); }
input[type=checkbox]:disabled { border-color: #cac8bb; background: #fff; }
.orient { display: block; margin: 3px 0 3px 2px; }
.rot { gap: 16px; padding-left: 2px; }
.dial { width: 50px; height: 50px; }
.rot .col { gap: 9px; padding-top: 5px; }
.rot .combo { height: 21px; }
.lab { display: block; padding-left: 2px; }
.cut { margin-top: 3px; }
.fill { width: 102px; height: 28px; padding-left: 6px; }
.swatch { width: 54px; height: 10px; margin: 0 4px 0 3px; border: 1px solid #000; outline: 1px solid #3f668f; background: #f4f2e6; }
.side .thumb { height: 69%; }

.strip { display: flex; flex-direction: column; align-items: center; flex: 1; padding-top: 7px; }
.deckmenu { height: 18px; }
.deckmenu svg { width: 18px; height: 18px; }
.rule { width: 23px; height: 1px; margin: 10px 0 3px; background: #9c9989; }
.deck { width: 31px; height: 32px; margin-bottom: 3px; border: 1px solid transparent; border-radius: 3px; }
.deck.on { border-color: #d2cfbf; }
.deck svg { width: 24px; height: 24px; }

.status { display: flex; align-items: center; height: 24px; flex: none; padding-top: 4px; border-top: 1px solid #fff; }
.status > span { height: 17px; flex: none; white-space: nowrap; border-left: 1px solid #aca998; padding-left: 5px; }
.status .st-sheet { width: 202px; padding-left: 9px; border: 0; }
.st-style { width: 191px; }
.st-a { width: 54px; }
.st-mode { width: 48px; }
.st-b { width: 16px; }
.st-c { width: 29px; }
.status .st-sum { flex: 1; text-align: center; }
.status .st-zoom { display: flex; align-items: center; width: 153px; padding: 0 8px 4px 5px; gap: 4px; }
.st-zoom svg { width: 11px; height: 11px; }
.st-zoom input { flex: 1; min-width: 0; height: 12px; appearance: none; background: linear-gradient(#85837a, #85837a) center / 100% 2px no-repeat; }
.st-zoom input::-webkit-slider-thumb { appearance: none; width: 9px; height: 9px; border: 1px solid #4f6f94; border-radius: 50%; background: #a6c6ea; }
.st-pct { width: 47px; }

.taskbar { display: flex; align-items: center; height: 30px; flex: none; background: linear-gradient(#2a5fcb 0, #4a8bf0 2px, #2560dc 5px, #2158d8 20px, #2661e0 27px, #1941a5 30px); color: #fff; }
.start { width: 96px; height: 30px; justify-content: flex-start; gap: 4px; padding-left: 10px; border-radius: 0 8px 8px 0; background: linear-gradient(#4c9a4a, #58ad55 3px, #388a38 8px, #3d963d 22px, #2b722c); box-shadow: inset -3px 0 4px #256b28; font: italic bold 17px/20px "Open Sans", sans-serif; text-shadow: 1px 1px 2px #1b4420; }
.start svg { width: 20px; height: 18px; }
.task { width: 160px; height: 26px; margin-left: 9px; justify-content: flex-start; gap: 1px; padding-left: 13px; border-radius: 2px; background: #1c4fb4; box-shadow: inset 1px 1px 2px #0f3280; white-space: nowrap; }
.lang { margin-left: auto; padding: 0 2px; margin-right: 18px; background: #316ac5; }
.tray { display: flex; align-items: center; height: 30px; width: 93px; gap: 2px; background: linear-gradient(#0c59b9, #18b3f0 2px, #1290e8 8px, #1290e8 25px, #0d6fc4); }
.expand { margin-left: -9px; }
.expand svg { width: 18px; height: 18px; }
.t16 { width: 16px; height: 16px; }
time { margin-left: 6px; }

.watermark { position: absolute; left: 38px; top: 87px; font: 60px/64px "DejaVu Sans", sans-serif; color: rgba(60, 90, 90, .05); white-space: nowrap; pointer-events: none; }
.oslabel { position: absolute; right: 19px; top: 502px; width: 166px; font: 13px/16px "DejaVu Sans Condensed", sans-serif; color: #fff; white-space: nowrap; text-shadow: 1px 0 1px #555, -1px 0 1px #666, 0 1px 1px #555, 0 -1px 1px #666; pointer-events: none; }
```
FILE: script.js
```js
const body = document.querySelector('#cells tbody');
const columns = 8;
for (let r = 1; r <= 21; r++) {
  const row = body.insertRow();
  const head = document.createElement('th');
  head.textContent = r;
  if (r === 1) head.className = 'cur';
  row.append(head);
  for (let c = 0; c < columns; c++) {
    const cell = row.insertCell();
    if (r === 1 && c === 0) cell.className = 'pick';
  }
}
```
